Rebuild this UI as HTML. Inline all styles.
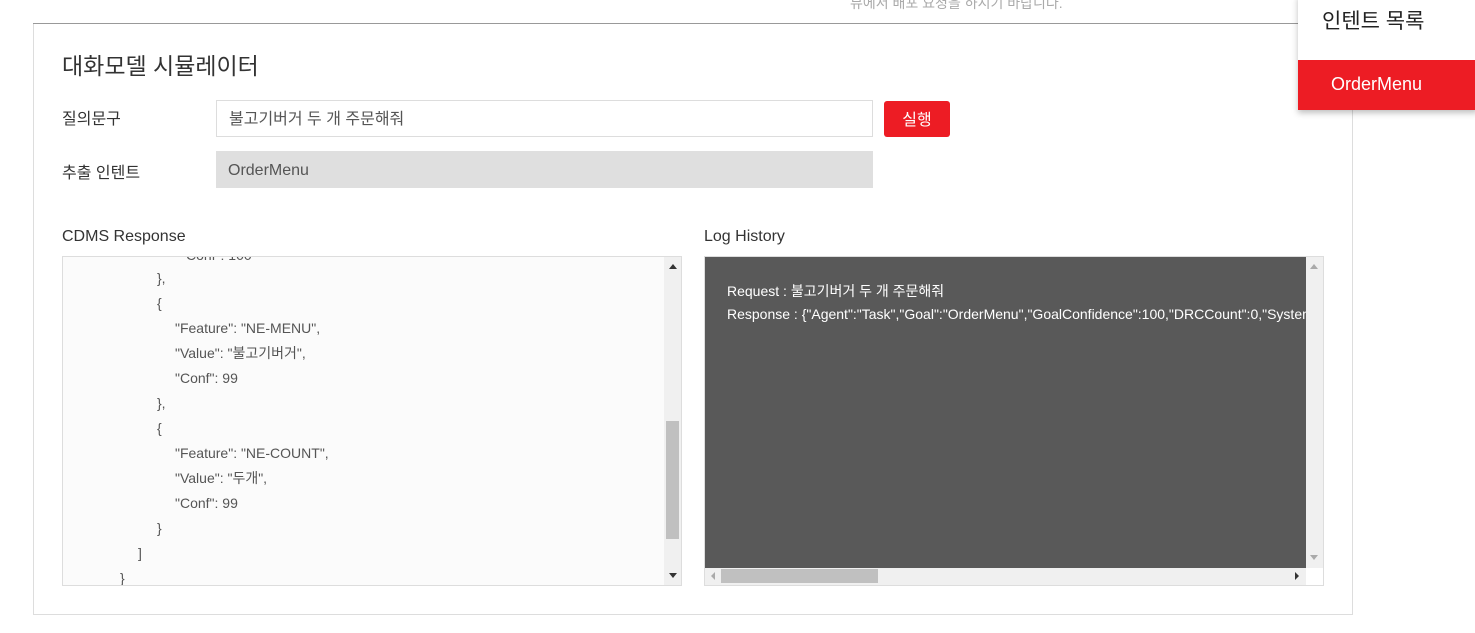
<!DOCTYPE html>
<html><head><meta charset="utf-8">
<style>
*{margin:0;padding:0;box-sizing:border-box}
body{width:1475px;height:633px;background:#fff;position:relative;overflow:hidden;font-family:"Liberation Sans","Noto Sans CJK KR",sans-serif;color:#333}
.a{position:absolute}
.json div{position:absolute;font-size:14px;color:#555;white-space:nowrap;line-height:16px}
</style></head><body>
<div class="a" style="left:850px;top:-7px;font-size:14px;color:#aaa">뷰에서 배포 요청을 하시기 바랍니다.</div>
<div class="a" style="left:33px;top:23px;width:1266px;height:1px;background:#999"></div>
<div class="a" style="left:33px;top:24px;width:1320px;height:591px;border:1px solid #ddd;border-top:none"></div>
<div class="a" style="left:62px;top:47px;font-size:23px;color:#333">대화모델 시뮬레이터</div>
<div class="a" style="left:62px;top:105px;font-size:16px">질의문구</div>
<div class="a" style="left:216px;top:100px;width:657px;height:37px;border:1px solid #ddd;font-size:16px;color:#555;padding:4px 12px">불고기버거 두 개 주문해줘</div>
<div class="a" style="left:884px;top:101px;width:66px;height:36px;background:#ed1c24;border-radius:3px;color:#fff;font-size:16px;text-align:center;line-height:40px">실행</div>
<div class="a" style="left:62px;top:159px;font-size:16px">추출 인텐트</div>
<div class="a" style="left:216px;top:151px;width:657px;height:37px;background:#dfdfdf;font-size:16px;color:#555;padding:11px 12px 0">OrderMenu</div>
<div class="a" style="left:62px;top:228px;font-size:16px">CDMS Response</div>
<div class="a" style="left:704px;top:228px;font-size:16px">Log History</div>

<div class="a" style="left:62px;top:256px;width:620px;height:330px;border:1px solid #ddd;background:#fbfbfb;overflow:hidden">
 <div class="json">
  <div style="left:118px;top:-10px">"Conf": 100</div>
  <div style="left:94px;top:13px">},</div>
  <div style="left:94px;top:38px">{</div>
  <div style="left:112px;top:63px">"Feature": "NE-MENU",</div>
  <div style="left:112px;top:88px">"Value": "불고기버거",</div>
  <div style="left:112px;top:113px">"Conf": 99</div>
  <div style="left:94px;top:138px">},</div>
  <div style="left:94px;top:163px">{</div>
  <div style="left:112px;top:188px">"Feature": "NE-COUNT",</div>
  <div style="left:112px;top:213px">"Value": "두개",</div>
  <div style="left:112px;top:238px">"Conf": 99</div>
  <div style="left:94px;top:263px">}</div>
  <div style="left:75px;top:288px">]</div>
  <div style="left:57px;top:313px">}</div>
 </div>
 <div class="a" style="right:0;top:0;width:17px;height:328px;background:#f0f0f0">
  <div class="a" style="left:5px;top:7px;border:4px solid transparent;border-bottom:5px solid #333;border-top:none"></div>
  <div class="a" style="left:2px;top:164px;width:13px;height:118px;background:#c0c0c0"></div>
  <div class="a" style="left:5px;top:316px;border:4px solid transparent;border-top:5px solid #333;border-bottom:none"></div>
 </div>
</div>

<div class="a" style="left:704px;top:256px;width:620px;height:330px;border:1px solid #ddd;background:#f0f0f0;overflow:hidden">
 <div class="a" style="left:0;top:0;width:601px;height:311px;background:#595959;color:#fff;font-size:14px;white-space:nowrap;overflow:hidden">
  <div class="a" style="left:22px;top:24px">Request : 불고기버거 두 개 주문해줘</div>
  <div class="a" style="left:22px;top:49px">Response : {"Agent":"Task","Goal":"OrderMenu","GoalConfidence":100,"DRCCount":0,"SystemResponse"</div>
 </div>
 <div class="a" style="left:605px;top:7px;border:4px solid transparent;border-bottom:5px solid #aaa;border-top:none"></div>
 <div class="a" style="left:605px;top:298px;border:4px solid transparent;border-top:5px solid #aaa;border-bottom:none"></div>
 <div class="a" style="left:16px;top:312px;width:157px;height:14px;background:#c0c0c0"></div>
 <div class="a" style="left:6px;top:315px;border:4px solid transparent;border-right:4px solid #aaa;border-left:none"></div>
 <div class="a" style="left:590px;top:315px;border:4px solid transparent;border-left:4px solid #333;border-right:none"></div>
 <div class="a" style="left:601px;top:311px;width:18px;height:18px;background:#fff;border-right:1px solid #333;border-bottom:1px solid #333"></div>
</div>

<div class="a" style="left:1298px;top:-5px;width:180px;height:115px;background:#fff;box-shadow:0 3px 6px rgba(0,0,0,.25)">
 <div class="a" style="left:24px;top:10px;font-size:21px;color:#222">인텐트 목록</div>
 <div class="a" style="left:0;top:65px;width:180px;height:50px;background:#ed1c24;color:#fff;font-size:18px;padding:14px 0 0 33px">OrderMenu</div>
</div>
</body></html>
